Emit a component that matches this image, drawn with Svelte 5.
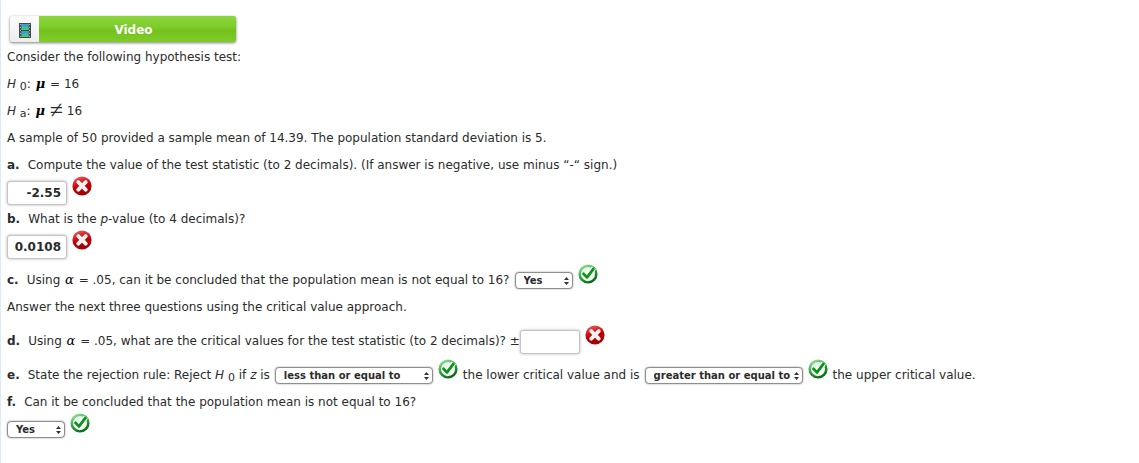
<script>
  let statistic = $state('-2.55');
  let pValue = $state('0.0108');
  let critical = $state('');
  let concludeC = $state('Yes');
  let lower = $state('less than or equal to');
  let upper = $state('greater than or equal to');
  let concludeF = $state('Yes');

  const yesNo = ['Yes', 'No'];
  const comparisons = ['less than or equal to', 'greater than or equal to', 'less than', 'greater than', 'equal to', 'not equal to'];
</script>

{#snippet wrong()}
  <svg class="mark" viewBox="0 0 20 20" role="img" aria-label="Incorrect">
    <defs>
      <linearGradient id="red" x1="0" y1="0" x2="0.3" y2="1">
        <stop offset="0" stop-color="#f0686a" />
        <stop offset="0.45" stop-color="#d8141c" />
        <stop offset="0.6" stop-color="#c00008" />
        <stop offset="1" stop-color="#a00006" />
      </linearGradient>
    </defs>
    <circle cx="10" cy="10" r="9.6" fill="url(#red)" />
    <path d="M6.8 6.8l6.4 6.4M13.2 6.8l-6.4 6.4" stroke="#8c0508" stroke-width="5.6" stroke-linecap="round" opacity=".35" />
    <path d="M6.3 6.2l7.4 7.4M13.7 6.2l-7.4 7.4" stroke="#f5f1ee" stroke-width="4" stroke-linecap="round" />
  </svg>
{/snippet}

{#snippet right()}
  <svg class="mark" viewBox="0 0 20 20" role="img" aria-label="Correct">
    <defs>
      <linearGradient id="green" x1="0.2" y1="0" x2="0.7" y2="1">
        <stop offset="0" stop-color="#8fdc98" />
        <stop offset="0.5" stop-color="#2aa43a" />
        <stop offset="1" stop-color="#066c12" />
      </linearGradient>
      <linearGradient id="pale" x1="0" y1="0" x2="0.6" y2="1">
        <stop offset="0" stop-color="#c4f0c8" />
        <stop offset="0.6" stop-color="#ffffff" />
      </linearGradient>
    </defs>
    <circle cx="10" cy="10" r="8.3" fill="url(#pale)" stroke="url(#green)" stroke-width="2.6" />
    <path d="M5 9.2l4.400 4.400L15.800 4" fill="none" stroke="#fff" stroke-width="5" />
    <path d="M4.800 9l4.200 4.400L16 4.200" fill="none" stroke="#08951a" stroke-width="2.8" stroke-linejoin="round" />
  </svg>
{/snippet}

{#snippet arrows()}
  <svg class="arrows" viewBox="0 0 5 8" aria-hidden="true">
    <path d="M2.5 0L5 3H0zM2.5 8L5 5H0z" fill="#333" />
  </svg>
{/snippet}

<main>
  <button class="video" type="button">
    <span class="film">
      <svg viewBox="0 0 12 15" aria-hidden="true">
        <path d="M0 0h12v15H0z" fill="#4a474c" />
        <path d="M2.5 1h7v6h-7zM2.5 8h7v6h-7z" fill="#35c9a0" />
        <path d="M2.5 1h7v2L6 5 2.5 3zM2.5 8h7v2L6 12l-3.5-2z" fill="#3d9de0" />
        <path d="M2.5 6L6 4l3.5 1v2h-7zM2.5 13L6 11l3.5 1v2h-7z" fill="#35d35c" />
        <path d="M1 1h1v1H1zM1 4h1v1H1zM1 7h1v1H1zM1 10h1v1H1zM1 13h1v1H1zM10 1h1v1h-1zM10 4h1v1h-1zM10 7h1v1h-1zM10 10h1v1h-1zM10 13h1v1h-1z" fill="#b9b9bc" />
      </svg>
    </span>
    <span class="caption">Video</span>
  </button>

  <p>Consider the following hypothesis test:</p>
  <p><span><i>H</i> <sub>0</sub>: <span class="greek mu">μ</span> = 16</span></p>
  <p><span><i>H</i> <sub>a</sub>: <span class="greek mu">μ</span> <span class="unequal">≠</span> 16</span></p>
  <p>A sample of 50 provided a sample mean of 14.39. The population standard deviation is 5.</p>

  <p><b>a.</b><label for="statistic">Compute the value of the test statistic (to 2 decimals). (If answer is negative, use minus “-“ sign.)</label></p>
  <div class="row">
    <input id="statistic" type="text" bind:value={statistic} />
    {@render wrong()}
  </div>

  <p><b>b.</b><label for="p-value">What is the <i>p</i>-value (to 4 decimals)?</label></p>
  <div class="row">
    <input id="p-value" type="text" bind:value={pValue} />
    {@render wrong()}
  </div>

  <div class="row spaced">
    <b>c.</b><label for="conclude-c">Using <span class="greek">α</span> = .05, can it be concluded that the population mean is not equal to 16?</label>
    <span class="pick after">
      <select id="conclude-c" bind:value={concludeC}>
        {#each yesNo as option}<option>{option}</option>{/each}
      </select>
      {@render arrows()}
    </span>
    {@render right()}
  </div>
  <p>Answer the next three questions using the critical value approach.</p>

  <div class="row spaced">
    <b>d.</b><label for="critical">Using <span class="greek">α</span> = .05, what are the critical values for the test statistic (to 2 decimals)? ±</label>
    <input id="critical" type="text" bind:value={critical} />
    {@render wrong()}
  </div>

  <div class="row spaced">
    <b>e.</b><label for="lower">State the rejection rule: Reject <i>H</i> <sub>0</sub> if <i>z</i> is</label>
    <span class="pick wide after">
      <select id="lower" bind:value={lower}>
        {#each comparisons as option}<option>{option}</option>{/each}
      </select>
      {@render arrows()}
    </span>
    {@render right()}
    <label class="after" for="upper">the lower critical value and is</label>
    <span class="pick wide after">
      <select id="upper" bind:value={upper}>
        {#each comparisons as option}<option>{option}</option>{/each}
      </select>
      {@render arrows()}
    </span>
    {@render right()}
    <span class="after">the upper critical value.</span>
  </div>

  <p><b>f.</b><label for="conclude-f">Can it be concluded that the population mean is not equal to 16?</label></p>
  <div class="row">
    <span class="pick">
      <select id="conclude-f" bind:value={concludeF}>
        {#each yesNo as option}<option>{option}</option>{/each}
      </select>
      {@render arrows()}
    </span>
    {@render right()}
  </div>
</main>

<style>
  :global(body) {
    background: #fff;
  }

  main {
    box-sizing: border-box;
    min-height: 100vh;
    padding: 16px 6px;
    border-left: 1px solid #dcebfc;
    color: #2b2b2b;
    font-family: Verdana, "DejaVu Sans", sans-serif;
    font-size: 12px;
    line-height: 15px;
  }

  .video {
    display: flex;
    width: 226px;
    height: 26px;
    margin: 0 0 2px 3px;
    padding: 0;
    border: 0;
    border-radius: 2px;
    overflow: hidden;
    background: linear-gradient(#8bd63c, #7ccb2a 45%, #74c11c 55%, #7fcb2b);
    box-shadow: 0 1px 3px rgba(0, 0, 0, 0.5);
    color: #fff;
    font: bold 12px/26px Verdana, "DejaVu Sans", sans-serif;
    cursor: pointer;
  }

  .film {
    display: flex;
    align-items: center;
    justify-content: center;
    width: 29px;
    height: 28px;
    background: linear-gradient(#fcfcfc, #ececec);
  }

  .film svg {
    width: 12px;
    height: 15px;
  }

  .caption {
    flex: 1;
    padding-right: 8px;
    line-height: 28px;
  }

  p,
  .row {
    display: flex;
    align-items: center;
    min-height: 27px;
    margin: 0;
    white-space: nowrap;
  }

  .spaced {
    padding-top: 7px;
  }

  b {
    margin-right: 8px;
  }

  sub {
    font-size: 11px;
    line-height: 0;
    vertical-align: -2px;
  }

  .greek {
    margin: 0 1px;
    font-family: "DejaVu Serif", serif;
    font-size: 13px;
    font-style: italic;
    line-height: 0;
    color: #000;
  }

  .mu {
    font-weight: bold;
  }

  .unequal {
    font-family: "Liberation Serif", serif;
    font-size: 24px;
    line-height: 0;
    vertical-align: -3px;
  }

  input {
    box-sizing: border-box;
    width: 60px;
    height: 24px;
    padding: 0 5px;
    border: 1px solid #c4c4c4;
    border-radius: 3px;
    background: #fff;
    box-shadow: 0 0 3px rgba(0, 0, 0, 0.3);
    color: #2b2b2b;
    font: bold 12px/15px Verdana, "DejaVu Sans", sans-serif;
    text-align: right;
  }

  .pick {
    position: relative;
    width: 58px;
  }

  .wide {
    width: 158px;
  }

  .after {
    margin-left: 5px;
  }

  select {
    display: block;
    box-sizing: border-box;
    width: 100%;
    height: 17px;
    padding: 0 0 0 8px;
    appearance: none;
    border: 1px solid #8e8e8e;
    border-radius: 4px;
    background: #fff;
    box-shadow: 0 0 2px rgba(0, 0, 0, 0.4);
    color: #2b2b2b;
    font: bold 10px/15px Verdana, "DejaVu Sans", sans-serif;
  }

  .arrows {
    position: absolute;
    top: 5px;
    right: 4px;
    width: 5px;
    height: 8px;
    pointer-events: none;
  }

  .mark {
    flex: none;
    width: 20px;
    height: 20px;
    margin: -7px 0 6px 5px;
  }
</style>
